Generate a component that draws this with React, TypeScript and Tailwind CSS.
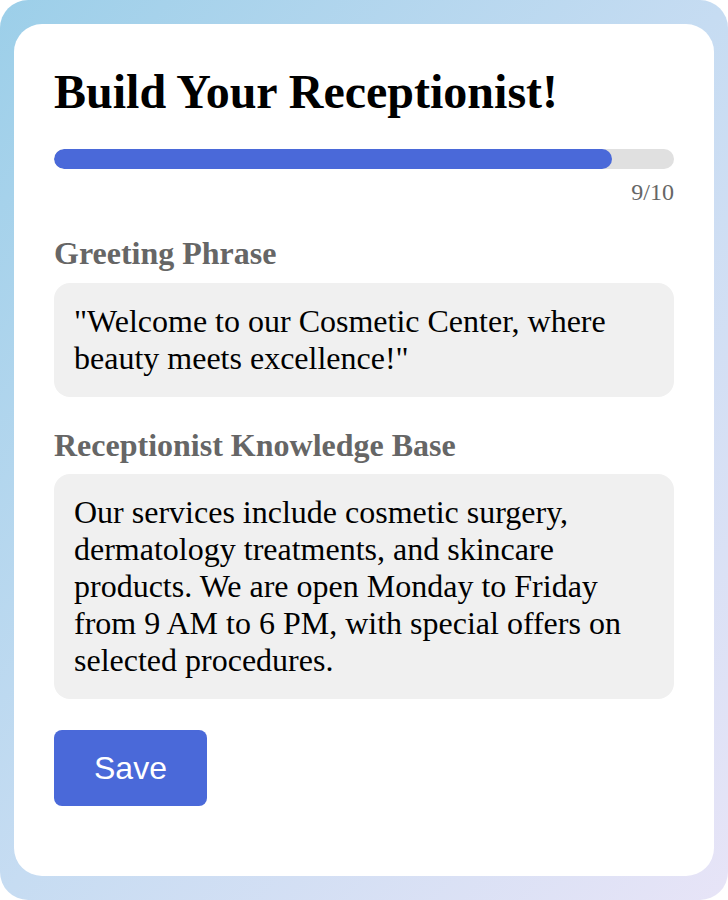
export default function App() {
  const step = 9
  const total = 10

  return (
    <div className="h-[900px] w-[728px] bg-white">
      <div className="flex h-full w-full flex-col rounded-[28px] bg-gradient-to-br from-[#9ccfe9] via-[#c6dcf2] to-[#e7e4f7] px-[14px] py-[24px]">
        <div className="flex flex-1 flex-col rounded-[28px] bg-white p-10 font-['Liberation_Serif',serif]">
          <h1 className="mb-[30px] text-[48px] font-bold leading-[55px] text-black">Build Your Receptionist!</h1>

          <div className="h-[20px] w-full overflow-hidden rounded-full bg-[#e0e0e0]">
            <div className="h-full rounded-full bg-[#4a69d9]" style={{ width: `${(step / total) * 100}%` }} />
          </div>
          <div className="mt-[9px] text-right text-[24px] leading-[28px] text-[#666]">
            {step}/{total}
          </div>

          <label className="mt-[29px] text-[32px] font-bold leading-[37px] text-[#666]">Greeting Phrase</label>
          <div className="mt-[11px] rounded-[16px] bg-[#f0f0f0] px-5 py-5 text-[32px] leading-[37px] text-black">
            "Welcome to our Cosmetic Center, where beauty meets excellence!"
          </div>

          <label className="mt-[30px] text-[32px] font-bold leading-[37px] text-[#666]">Receptionist Knowledge Base</label>
          <div className="mt-[10px] rounded-[16px] bg-[#f0f0f0] px-5 py-5 text-[32px] leading-[37px] text-black">
            Our services include cosmetic surgery, dermatology treatments, and skincare products. We are open Monday to Friday from 9 AM to 6 PM, with special offers on selected procedures.
          </div>

          <div className="mt-[31px]">
            <button className="rounded-[8px] bg-[#4a69d9] px-10 py-5 font-['Liberation_Sans',Arial,sans-serif] text-[32px] leading-[36px] text-white">
              Save
            </button>
          </div>
        </div>
      </div>
    </div>
  )
}
